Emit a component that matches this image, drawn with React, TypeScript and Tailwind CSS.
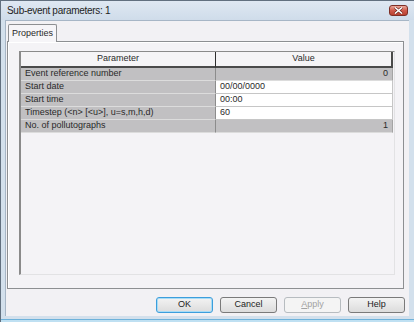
const rows = [
  { name: 'Event reference number', value: '0', editable: false },
  { name: 'Start date', value: '00/00/0000', editable: true },
  { name: 'Start time', value: '00:00', editable: true },
  { name: 'Timestep (<n> [<u>], u=s,m,h,d)', value: '60', editable: true },
  { name: 'No. of pollutographs', value: '1', editable: false },
];

function CloseButton() {
  return (
    <div className="mr-[6px] flex h-[11px] w-[19px] items-center justify-center rounded-[3px] border border-[#7d2f26] bg-linear-to-b from-[#e9a89c] via-[#cf5a4b] to-[#b8402f]">
      <svg width="9" height="7" viewBox="0 0 9 7">
        <path d="M1 0.5 L8 6.5 M8 0.5 L1 6.5" stroke="#5a1a12" strokeWidth="2.6" />
        <path d="M1 0.5 L8 6.5 M8 0.5 L1 6.5" stroke="#ffffff" strokeWidth="1.6" />
      </svg>
    </div>
  );
}

function DlgButton({ label, focused, disabled }: { label: React.ReactNode; focused?: boolean; disabled?: boolean }) {
  return (
    <div
      className={`flex h-[16px] w-[57px] items-center justify-center rounded-[3px] border text-[9px] ${
        disabled
          ? 'border-[#b7bcc0] bg-[#f4f4f4] text-[#a2a2a2]'
          : focused
          ? 'border-[#3c9edc] bg-linear-to-b from-[#f3f3f3] to-[#dcdcdc] text-[#222222] shadow-[inset_0_0_0_1px_#a8dcf6]'
          : 'border-[#7a7a7a] bg-linear-to-b from-[#f3f3f3] to-[#dcdcdc] text-[#222222]'
      }`}
    >
      {label}
    </div>
  );
}

export default function App() {
  return (
    <div className="h-[322px] w-[414px] overflow-hidden bg-[#d3e0ec] font-['Liberation_Sans',Arial,sans-serif] text-[#2a2a2a]">
      <div className="flex h-full flex-col border-l border-t border-[#62707f]">
        {/* Title bar */}
        <div className="flex h-[19px] shrink-0 items-center justify-between bg-linear-to-b from-[#dfe8f2] to-[#cfdcea] pl-[6px]">
          <span className="text-[10px] tracking-[-0.3px] text-[#1e1e1e]">Sub-event parameters: 1</span>
          <CloseButton />
        </div>

        {/* Client */}
        <div className="flex flex-1 flex-col pb-[3px] pl-[4px] pr-[5px]">
          <div className="flex flex-1 flex-col border-l border-t border-[#a7b6c6] bg-[#f2f1f4]">
            {/* Tab strip */}
            <div className="flex pl-[2px] pt-[3px]">
              <div className="relative z-10 -mb-px flex h-[18px] w-[49px] items-center justify-center rounded-t-[2px] border border-b-0 border-[#8d8f92] bg-[#f6f5f8] text-[9px]">
                Properties
              </div>
            </div>

            {/* Panel */}
            <div className="ml-[1px] mr-[5px] flex h-[248px] flex-col border border-[#8d8f92] bg-[#f4f3f6] pb-[13px] pl-[11px] pr-[8px] pt-[9px] shadow-[inset_1px_1px_0_#ffffff]">
              <div className="flex flex-1 flex-col border-b border-l-2 border-r border-t border-b-[#e2e2e4] border-l-[#8a8a8a] border-r-[#e2e2e4] border-t-[#8a8a8a] bg-[#f4f3f6] text-[9px]">
                {/* Header */}
                <div className="flex h-[16px] shrink-0">
                  <div className="flex w-[195px] items-center justify-center border-b-2 border-r border-b-[#4a4a4a] border-r-[#2e2e2e] bg-[#f5f4f6]">
                    Parameter
                  </div>
                  <div className="flex w-[177px] items-center justify-center border-b-2 border-r-2 border-b-[#4a4a4a] border-r-[#4a4a4a] bg-[#f5f4f6]">
                    Value
                  </div>
                </div>

                {rows.map((r) => (
                  <div key={r.name} className="flex h-[13px] shrink-0">
                    <div className="flex w-[195px] items-center whitespace-pre border-b border-r border-b-[#dcdcdc] border-r-[#8c8c8c] bg-[#c1c0c2] pl-[4px]">
                      {r.name}
                    </div>
                    {r.editable ? (
                      <div className="flex w-[177px] items-center border-b border-r border-[#c6c6c6] bg-white pl-[4px]">
                        {r.value}
                      </div>
                    ) : (
                      <div className="flex w-[177px] items-center justify-end border-b border-r border-b-[#dcdcdc] border-r-[#a4a4a4] bg-[#c1c0c2] pr-[4px]">
                        {r.value}
                      </div>
                    )}
                  </div>
                ))}
              </div>
            </div>

            {/* Buttons */}
            <div className="flex justify-end gap-[7px] pr-[4px] pt-[8px]">
              <DlgButton label="OK" focused />
              <DlgButton label="Cancel" />
              <DlgButton
                label={
                  <span>
                    <span className="underline">A</span>pply
                  </span>
                }
                disabled
              />
              <DlgButton label="Help" />
            </div>
          </div>
        </div>
        <div className="h-[1px] shrink-0 bg-[#6fb2da]" />
        <div className="h-[2px] shrink-0 bg-[#bfe0f2]" />
      </div>
    </div>
  );
}
